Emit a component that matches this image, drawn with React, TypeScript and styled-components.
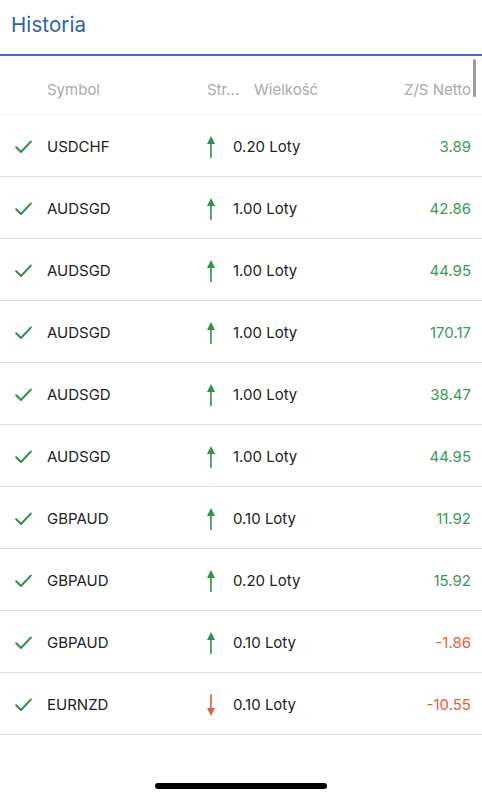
import React from "react";
import styled, { createGlobalStyle } from "styled-components";

const Global = createGlobalStyle`
  html, body { margin: 0; padding: 0; background: #fff; }
  body { font-family: Inter, "Noto Sans", "Liberation Sans", sans-serif; -webkit-font-smoothing: antialiased; }
`;

const Screen = styled.div`
  position: relative;
  width: 482px;
  height: 800px;
  overflow: hidden;
  background: #fff;
`;

const TitleBar = styled.header`
  height: 56px;
  display: flex;
  align-items: center;
  padding: 0 11px 5px;
  box-sizing: border-box;
  border-bottom: 2px solid #3d6fb3;
`;

const Title = styled.h1`
  margin: 0;
  font-size: 20.5px;
  font-weight: 400;
  color: #2f61a5;
  letter-spacing: 0.1px;
`;

const HeaderRow = styled.div`
  height: 59px;
  box-sizing: border-box;
  padding-top: 8px;
  display: grid;
  grid-template-columns: 47px 160px 47px 1fr auto;
  align-items: center;
  padding-right: 11px;
  border-bottom: 1px solid #f2f2f2;
  font-size: 15px;
  color: #a9a9a9;
`;

const HeadCell = styled.span<{ $col: number }>`
  grid-column: ${(p) => p.$col};
  white-space: nowrap;
`;

const Row = styled.div`
  height: 62px;
  box-sizing: border-box;
  display: grid;
  grid-template-columns: 47px 153px 22px 1fr auto;
  align-items: center;
  padding-right: 11px;
  padding-top: 2px;
  border-bottom: 1.5px solid #dedede;
  font-size: 15px;
  color: #222;
`;

const CheckCell = styled.div`
  display: flex;
  padding-left: 15px;
  padding-top: 1px;
`;

const ArrowCell = styled.div`
  display: flex;
  justify-content: center;
  padding-top: 1px;
`;

const Volume = styled.span`
  padding-left: 11px;
`;

const Value = styled.span<{ $neg: boolean }>`
  color: ${(p) => (p.$neg ? "#e5603a" : "#3a9a53")};
  text-align: right;
`;

const ScrollThumb = styled.div`
  position: absolute;
  right: 6px;
  top: 59px;
  width: 3px;
  height: 38px;
  border-radius: 2px;
  background: #9c9c9c;
`;

const HomeIndicator = styled.div`
  position: absolute;
  left: 155px;
  top: 783px;
  width: 172px;
  height: 6px;
  border-radius: 3px;
  background: #000;
`;

const GREEN = "#2f9548";
const RED = "#e5603a";

const Check = () => (
  <svg width="17" height="14" viewBox="0 0 17 14">
    <path d="M1.2 7.2 L6 12 L15.8 1.6" fill="none" stroke="#2f8f4a" strokeWidth="2" strokeLinecap="round" strokeLinejoin="round" />
  </svg>
);

const Arrow = ({ up }: { up: boolean }) => (
  <svg width="10" height="24" viewBox="0 0 10 24" style={{ transform: up ? undefined : "rotate(180deg)" }}>
    <path d="M5 1 L9 9 L1 9 Z" fill={up ? GREEN : RED} />
    <rect x="4.2" y="8" width="1.6" height="15" fill={up ? GREEN : RED} />
  </svg>
);

const rows = [
  { s: "USDCHF", v: "0.20", p: "3.89", up: true },
  { s: "AUDSGD", v: "1.00", p: "42.86", up: true },
  { s: "AUDSGD", v: "1.00", p: "44.95", up: true },
  { s: "AUDSGD", v: "1.00", p: "170.17", up: true },
  { s: "AUDSGD", v: "1.00", p: "38.47", up: true },
  { s: "AUDSGD", v: "1.00", p: "44.95", up: true },
  { s: "GBPAUD", v: "0.10", p: "11.92", up: true },
  { s: "GBPAUD", v: "0.20", p: "15.92", up: true },
  { s: "GBPAUD", v: "0.10", p: "-1.86", up: true },
  { s: "EURNZD", v: "0.10", p: "-10.55", up: false },
];

export default function App() {
  return (
    <Screen>
      <Global />
      <TitleBar>
        <Title>Historia</Title>
      </TitleBar>
      <HeaderRow>
        <HeadCell $col={2}>Symbol</HeadCell>
        <HeadCell $col={3}>Str...</HeadCell>
        <HeadCell $col={4}>Wielkość</HeadCell>
        <HeadCell $col={5}>Z/S Netto</HeadCell>
      </HeaderRow>
      {rows.map((r, i) => (
        <Row key={i}>
          <CheckCell>
            <Check />
          </CheckCell>
          <span>{r.s}</span>
          <ArrowCell>
            <Arrow up={r.up} />
          </ArrowCell>
          <Volume>{r.v} Loty</Volume>
          <Value $neg={r.p.startsWith("-")}>{r.p}</Value>
        </Row>
      ))}
      <ScrollThumb />
      <HomeIndicator />
    </Screen>
  );
}
